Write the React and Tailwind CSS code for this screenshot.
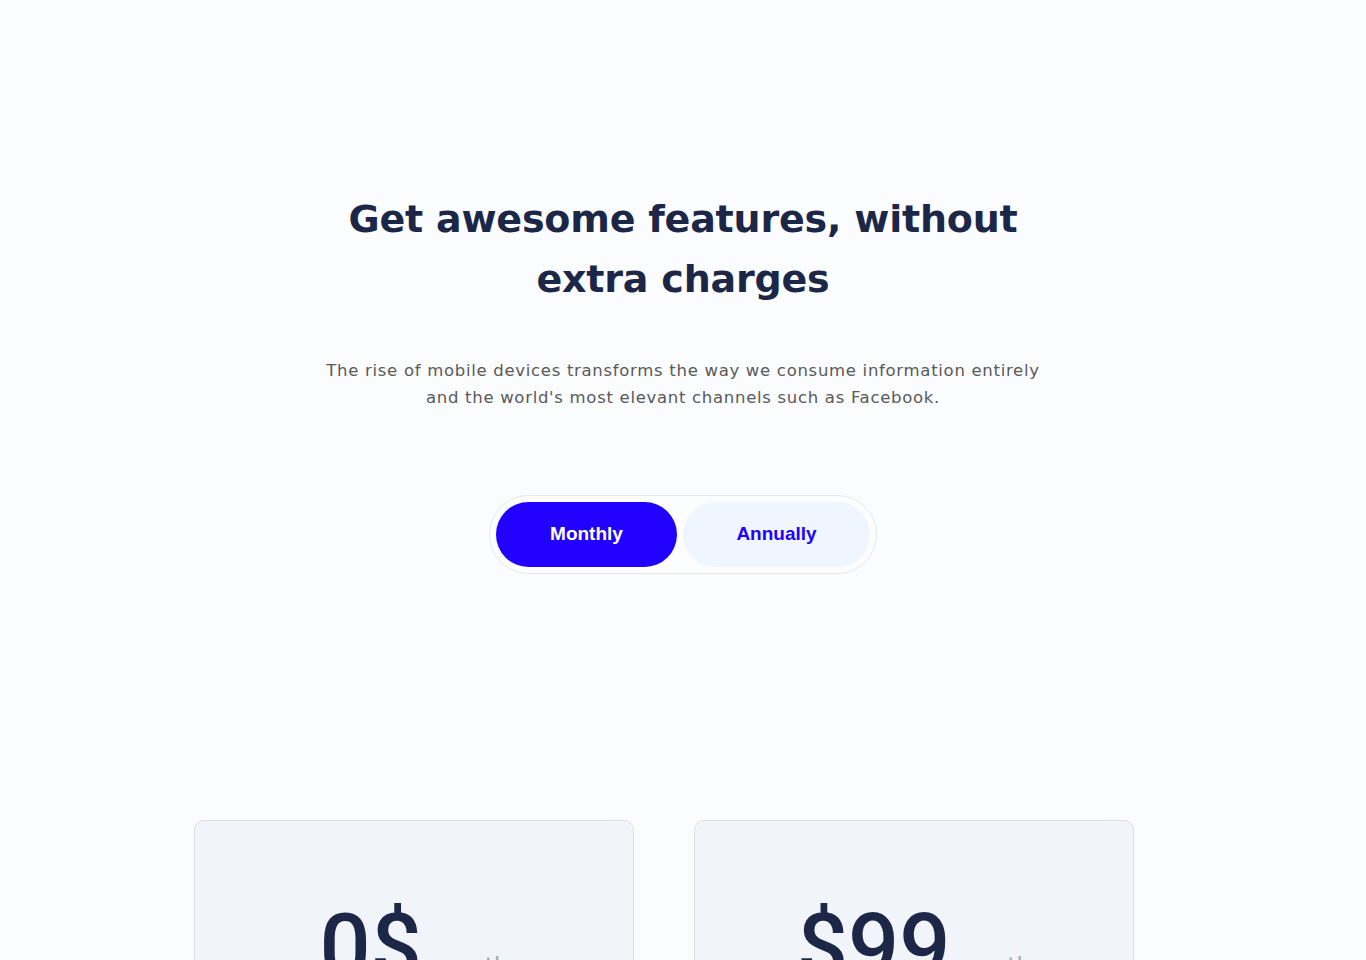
export default function App() {
  return (
    <div className="h-[960px] w-full bg-[#fbfcfe] overflow-hidden" style={{ fontFamily: '"DejaVu Sans", sans-serif' }}>
      <div className="flex flex-col items-center pt-[189px]">
        <h1 className="text-center text-[38px] leading-[60px] font-bold text-[#1c2748] tracking-[-0.2px]">
          Get awesome features, without
          <br />
          extra charges
        </h1>
        <p className="mt-[48px] text-center text-[16.5px] leading-[27px] text-[#595959] tracking-[0.7px]">
          The rise of mobile devices transforms the way we consume information entirely
          <br />
          and the world's most elevant channels such as Facebook.
        </p>
        <div className="mt-[84px] flex items-center gap-[6px] p-[6px] rounded-full border border-[#e6e8ec] bg-[#fcfdfe]" style={{ fontFamily: '"Liberation Sans", Arial, sans-serif' }}>
          <button className="w-[181px] h-[65px] rounded-full bg-[#2200ff] text-white text-[19px] font-bold">Monthly</button>
          <button className="w-[187px] h-[65px] rounded-full bg-[#f0f6ff] text-[#2200ff] text-[19px] font-bold">Annually</button>
        </div>
        <div className="w-full mt-[246px] flex gap-[60px] pl-[194px]">
          {[
            { price: '0$', gap: 'gap-[12px]' },
            { price: '$99', gap: 'gap-[6px]' },
          ].map((c, i) => (
            <div key={i} className="w-[440px] h-[300px] shrink-0 rounded-[10px] border border-[#dcdfe3] bg-[#f1f4f8] flex justify-center pt-[82px]">
              <div className={`flex items-baseline h-fit ${c.gap}`}>
                <span className="text-[90px] leading-none font-medium text-[#1c2748]" style={{ fontFamily: 'Roboto, sans-serif' }}>{c.price}</span>
                <span className="relative -top-[4px] text-[23px] text-[#a3a8b3]">month</span>
              </div>
            </div>
          ))}
        </div>
      </div>
    </div>
  );
}
